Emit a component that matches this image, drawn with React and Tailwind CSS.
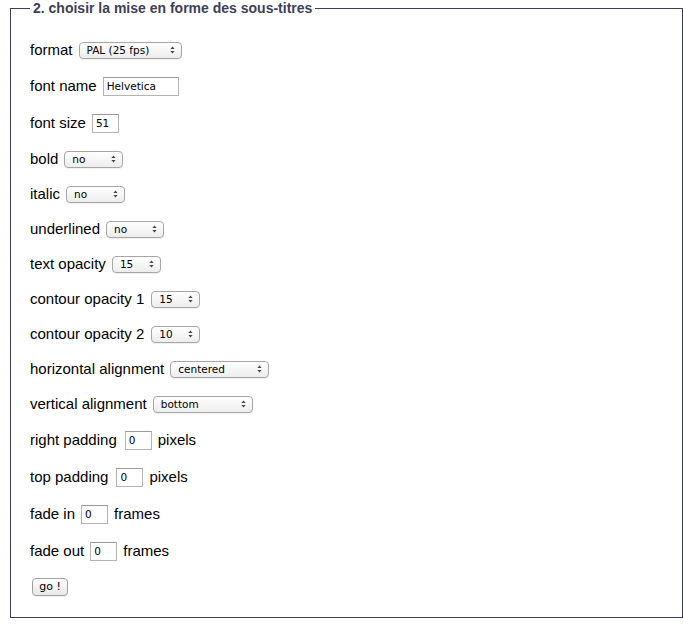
import React from "react";

function Arrows() {
  return (
    <svg className="pointer-events-none absolute right-[7px] top-1/2 -translate-y-1/2" width="5" height="8" viewBox="0 0 5 8">
      <path d="M2.5 0.5 L4.6 3 L0.4 3 Z" fill="#444" />
      <path d="M2.5 7.5 L4.6 5 L0.4 5 Z" fill="#444" />
    </svg>
  );
}

function Sel({ w, value, options }) {
  return (
    <span className="relative inline-flex">
      <select
        defaultValue={value}
        style={{ width: w }}
        className="h-[17px] appearance-none rounded-[4px] border border-[#a6a6a6] bg-gradient-to-b from-white to-[#ededed] pl-[7px] text-[10.5px] leading-[15px] text-black shadow-[0_1px_0_rgba(0,0,0,0.06)] outline-none [font-family:'DejaVu_Sans',sans-serif]"
      >
        {(options || [value]).map((o) => (
          <option key={o} value={o}>{o}</option>
        ))}
      </select>
      <Arrows />
    </span>
  );
}

function Inp({ w, value }) {
  return (
    <input
      type="text"
      defaultValue={value}
      style={{ width: w }}
      className="h-[19px] border border-[#b4b4b4] border-t-[#9a9a9a] bg-white px-[3px] text-[10.5px] text-black outline-none [font-family:'DejaVu_Sans',sans-serif]"
    />
  );
}

function Row({ children, h = "h-[18px]", gap = "gap-[6px]" }) {
  return <div className={`flex ${h} items-center ${gap} whitespace-nowrap`}>{children}</div>;
}

export default function App() {
  return (
    <div className="min-h-[624px] w-[683px] bg-white pt-0 [font-family:'Liberation_Sans',Arial,sans-serif]">
      <fieldset className="ml-[10px] w-[673px] border border-[#3b3e55] px-[19px] pb-[21px] pt-[25px]">
        <legend className="px-[3px] text-[14px] font-bold leading-[16px] text-[#3d4057]">
          2. choisir la mise en forme des sous-titres
        </legend>
        <div className="flex flex-col gap-[17px] text-[15px] text-black">
          <Row>
            <span>format</span>
            <Sel w={103} value="PAL (25 fps)" options={["PAL (25 fps)", "NTSC (29.97 fps)", "Film (24 fps)"]} />
          </Row>
          <Row h="h-[20px]">
            <span>font name</span>
            <Inp w={76} value="Helvetica" />
          </Row>
          <Row h="h-[20px]">
            <span>font size</span>
            <Inp w={27} value="51" />
          </Row>
          <Row>
            <span>bold</span>
            <Sel w={59} value="no" options={["no", "yes"]} />
          </Row>
          <Row>
            <span>italic</span>
            <Sel w={59} value="no" options={["no", "yes"]} />
          </Row>
          <Row>
            <span>underlined</span>
            <Sel w={58} value="no" options={["no", "yes"]} />
          </Row>
          <Row>
            <span>text opacity</span>
            <Sel w={49} value="15" />
          </Row>
          <Row gap="gap-[7px]">
            <span>contour opacity 1</span>
            <Sel w={49} value="15" />
          </Row>
          <Row gap="gap-[7px]">
            <span>contour opacity 2</span>
            <Sel w={49} value="10" />
          </Row>
          <Row>
            <span>horizontal alignment</span>
            <Sel w={99} value="centered" options={["left", "centered", "right"]} />
          </Row>
          <Row>
            <span>vertical alignment</span>
            <Sel w={100} value="bottom" options={["top", "middle", "bottom"]} />
          </Row>
          <Row h="h-[20px]">
            <span className="mr-[2px]">right padding</span>
            <Inp w={27} value="0" />
            <span>pixels</span>
          </Row>
          <Row h="h-[20px]">
            <span className="mr-[2px]">top padding</span>
            <Inp w={27} value="0" />
            <span>pixels</span>
          </Row>
          <Row h="h-[20px]">
            <span>fade in</span>
            <Inp w={27} value="0" />
            <span>frames</span>
          </Row>
          <Row h="h-[20px]">
            <span>fade out</span>
            <Inp w={27} value="0" />
            <span>frames</span>
          </Row>
          <Row>
            <button
              type="button"
              className="ml-[2px] h-[18px] w-[36px] rounded-[4px] border border-[#a0a0a0] bg-gradient-to-b from-white to-[#e8e8e8] text-[11px] leading-[16px] text-black shadow-[0_1px_0_rgba(0,0,0,0.06)] [font-family:'DejaVu_Sans',sans-serif]"
            >
              go !
            </button>
          </Row>
        </div>
      </fieldset>
    </div>
  );
}
